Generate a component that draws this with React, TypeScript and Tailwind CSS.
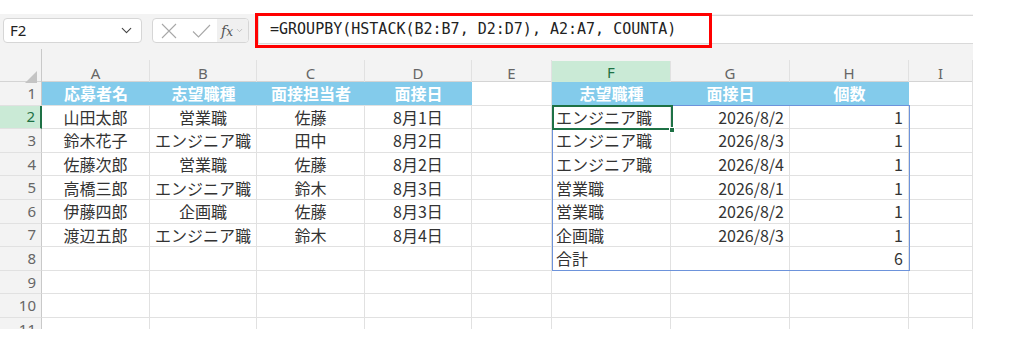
import { ChevronDown } from "lucide-react"

const COLS = "grid-cols-[42px_108px_107px_108px_107px_80px_119px_119px_119px_64px]"
const LETTERS = ["A", "B", "C", "D", "E", "F", "G", "H", "I"]

type Row = string[]

const rows: Row[] = [
  ["応募者名", "志望職種", "面接担当者", "面接日", "", "志望職種", "面接日", "個数", ""],
  ["山田太郎", "営業職", "佐藤", "8月1日", "", "エンジニア職", "2026/8/2", "1", ""],
  ["鈴木花子", "エンジニア職", "田中", "8月2日", "", "エンジニア職", "2026/8/3", "1", ""],
  ["佐藤次郎", "営業職", "佐藤", "8月2日", "", "エンジニア職", "2026/8/4", "1", ""],
  ["高橋三郎", "エンジニア職", "鈴木", "8月3日", "", "営業職", "2026/8/1", "1", ""],
  ["伊藤四郎", "企画職", "佐藤", "8月3日", "", "営業職", "2026/8/2", "1", ""],
  ["渡辺五郎", "エンジニア職", "鈴木", "8月4日", "", "企画職", "2026/8/3", "1", ""],
  ["", "", "", "", "", "合計", "", "6", ""],
  ["", "", "", "", "", "", "", "", ""],
  ["", "", "", "", "", "", "", "", ""],
  ["", "", "", "", "", "", "", "", ""],
]

function alignFor(col: number) {
  if (col <= 3) return "justify-center"
  if (col === 5) return "justify-start pl-[4px]"
  if (col === 6 || col === 7) return "justify-end pr-[5px]"
  return "justify-center"
}

function Cell({ r, c, value }: { r: number; c: number; value: string }) {
  const isHead = r === 0 && ((c >= 0 && c <= 3) || (c >= 5 && c <= 7))
  if (isHead) {
    return (
      <div className="flex items-center justify-center bg-[#83cbeb] border-b border-[#e1e1e1] text-white font-bold">
        {value}
      </div>
    )
  }
  const isF2 = r === 1 && c === 5
  return (
    <div
      className={`relative flex items-center border-r border-b border-[#e1e1e1] ${alignFor(c)}`}
    >
      {value}
      {isF2 && (
        <>
          {/* spill range */}
          <div className="absolute z-10 left-0 top-[-1px] w-[358px] h-[166px] border-[1.5px] border-[#6d93db] pointer-events-none" />
          {/* active cell */}
          <div className="absolute z-20 left-0 top-[-1px] w-[121px] h-[25.5px] border-2 border-[#1e7145] pointer-events-none" />
          <div className="absolute z-20 left-[117px] top-[21px] w-[6px] h-[6px] bg-[#1e7145] border border-white" />
        </>
      )}
    </div>
  )
}

export default function App() {
  return (
    <div className="w-[1024px] h-[354px] bg-white overflow-hidden text-[#333]">
      <div className="w-[973px]">
        <div className="h-[14px]" />

        {/* formula bar */}
        <div className="relative h-[33px] bg-[#f3f3f3] flex items-center font-['Noto_Sans','Liberation_Sans',sans-serif]">
          <div className="ml-[3px] w-[139px] h-[25px] bg-white border border-[#d6d6d6] rounded-[4px] flex items-center justify-between pl-[6px] pr-[6px] text-[15px] text-[#222]">
            <span>F2</span>
            <ChevronDown size={17} strokeWidth={1.6} className="text-[#444]" />
          </div>
          <div className="ml-[10px] w-[97px] h-[25px] bg-white border border-[#d6d6d6] rounded-[4px] flex items-center overflow-hidden">
            <svg width="16" height="16" viewBox="0 0 16 16" className="ml-[8px] text-[#a8a8a8]">
              <path d="M1 1 15 15M15 1 1 15" stroke="currentColor" strokeWidth="1.1" fill="none" />
            </svg>
            <svg width="19" height="14" viewBox="0 0 19 14" className="ml-[15px] text-[#a8a8a8]">
              <path d="M1 7.5 6.5 13 18 1" stroke="currentColor" strokeWidth="1.1" fill="none" />
            </svg>
            <div className="ml-auto h-full w-[31px] bg-[#f0f0f0] flex items-center pl-[4px] gap-[2px]">
              <span className="italic font-['DejaVu_Serif',serif] text-[14px] text-[#555] leading-none">
                f<span className="text-[12px]">x</span>
              </span>
              <ChevronDown size={9} strokeWidth={1.5} className="text-[#999]" />
            </div>
          </div>
          <div className="ml-[9px] flex-1 h-[29px] mt-[-2px] bg-white border-y border-l border-[#d9d9d9] flex items-center pl-[11px] font-['DejaVu_Sans_Mono',monospace] text-[15px] text-[#222]">
            =GROUPBY(HSTACK(B2:B7, D2:D7), A2:A7, COUNTA)
          </div>
          <div className="absolute left-[255px] top-[-1px] w-[457px] h-[35px] border-[3px] border-[#ff0000] pointer-events-none" />
        </div>

        {/* sheet */}
        <div className="h-[282px] overflow-hidden bg-white">
          <div className={`grid ${COLS} h-[35px] bg-[#f3f3f3] border-b border-[#d4d4d4] font-['Noto_Sans','Liberation_Sans',sans-serif] text-[15px] text-[#666]`}>
            <div className="relative mt-[2px] border-r border-[#c9c9c9]">
              <div className="absolute right-[4px] bottom-[3px] w-0 h-0 border-l-[12px] border-l-transparent border-b-[12px] border-b-[#c4c4c4]" />
            </div>
            {LETTERS.map((l) =>
              l === "F" ? (
                <div key={l} className="mt-[14px] flex items-center justify-center bg-[#caead6] border-b-2 border-[#1e7145] border-r border-r-[#e1e1e1] text-[#1e7145]">
                  {l}
                </div>
              ) : (
                <div key={l} className="mt-[13px] flex items-center justify-center border-r border-[#e1e1e1]">
                  {l}
                </div>
              )
            )}
          </div>

          <div className={`grid ${COLS} auto-rows-[23.6px] font-['Noto_Sans_CJK_JP',sans-serif] text-[16px] leading-none`}>
            {rows.map((row, r) => (
              <div key={r} className="contents">
                <div
                  className={`flex items-center justify-end pr-[5px] border-b font-['Noto_Sans','Liberation_Sans',sans-serif] text-[15px] ${
                    r === 1
                      ? "bg-[#caead6] border-[#e1e1e1] border-r-2 border-r-[#1e7145] text-[#1e7145]"
                      : "bg-[#f3f3f3] border-[#e1e1e1] border-r border-r-[#c9c9c9] text-[#666]"
                  }`}
                >
                  {r + 1}
                </div>
                {row.map((v, c) => (
                  <Cell key={c} r={r} c={c} value={v} />
                ))}
              </div>
            ))}
          </div>
        </div>
      </div>
    </div>
  )
}
